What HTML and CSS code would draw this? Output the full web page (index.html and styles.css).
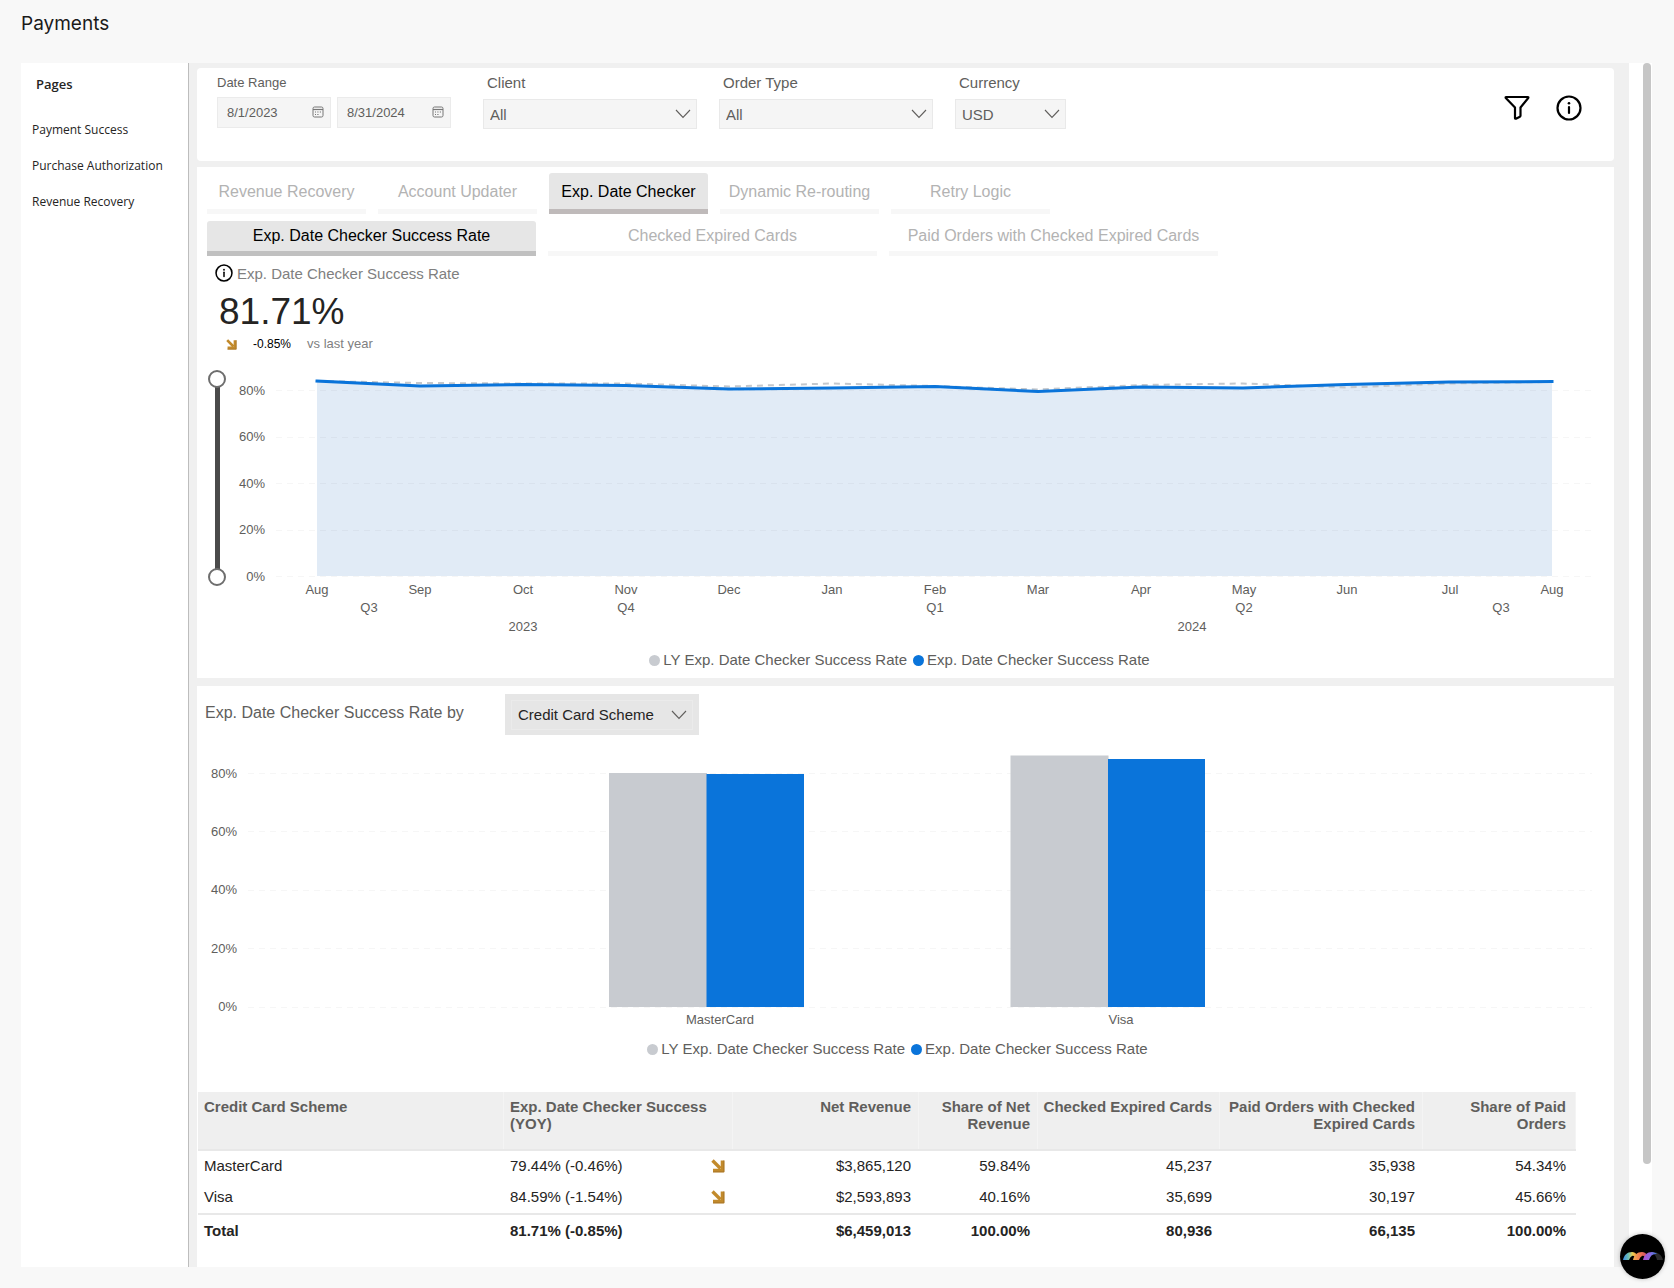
FILE: index.html
```html
<!DOCTYPE html>
<html lang="en">
<head>
<meta charset="utf-8">
<title>Payments</title>
<meta name="viewport" content="width=device-width, initial-scale=1">
<link rel="stylesheet" href="styles.css">
</head>
<body>
<svg class="defs" width="0" height="0" aria-hidden="true">
  <symbol id="chevron" viewBox="0 0 16 10"><path d="M1 1l7 7.500 7-7.500" fill="none" stroke="currentColor" stroke-width="1.100"/></symbol>
  <symbol id="calendar" viewBox="0 0 12 12"><rect x="1" y="1" width="10" height="10" rx="1.500" fill="none" stroke="currentColor"/><path d="M1 3.500h10" stroke="currentColor" stroke-width="1.200"/><path d="M5.300 6h1.200M7.800 6H9M3 6h1M3 8.500h1M5.300 8.500h1.200" stroke="currentColor" stroke-width="1.200"/></symbol>
  <symbol id="info" viewBox="0 0 26 26"><circle cx="13" cy="13" r="11.500" fill="none" stroke="currentColor" stroke-width="2.200"/><path d="M13 12v6" stroke="currentColor" stroke-width="2.200" stroke-linecap="round"/><circle cx="13" cy="8.300" r="1.300" fill="currentColor"/></symbol>
  <symbol id="down" viewBox="0 0 14 14"><path d="M1.500 1.500l8 8" stroke="#c28a2b" stroke-width="3.400"/><path d="M11.500 1.500v10H2" fill="none" stroke="#c28a2b" stroke-width="3.600"/><path d="M12.900 1.500V12.900H2" fill="none" stroke="#a8762a" stroke-width="1"/></symbol>
</svg>

<header class="page-header"><h1>Payments</h1></header>

<div class="report">
  <nav class="sidebar" aria-label="Pages">
    <h2>Pages</h2>
    <a href="#success">Payment Success</a>
    <a href="#authorization">Purchase Authorization</a>
    <a href="#recovery">Revenue Recovery</a>
  </nav>

  <main class="canvas">
    <section class="card filters">
      <div class="field dates">
        <label for="from">Date Range</label>
        <div class="date-row">
          <div class="date"><input id="from" type="text" value="8/1/2023"><svg class="cal"><use href="#calendar"/></svg></div>
          <div class="date"><input type="text" value="8/31/2024" aria-label="End date"><svg class="cal"><use href="#calendar"/></svg></div>
        </div>
      </div>
      <div class="field wide">
        <label for="client">Client</label>
        <div class="select"><select id="client"><option>All</option></select><svg class="chev"><use href="#chevron"/></svg></div>
      </div>
      <div class="field wide">
        <label for="order">Order Type</label>
        <div class="select"><select id="order"><option>All</option></select><svg class="chev"><use href="#chevron"/></svg></div>
      </div>
      <div class="field narrow">
        <label for="currency">Currency</label>
        <div class="select"><select id="currency"><option>USD</option></select><svg class="chev"><use href="#chevron"/></svg></div>
      </div>
      <div class="actions">
        <button class="icon-btn" type="button" aria-label="Filter"><svg width="26" height="26" viewBox="0 0 26 26"><path d="M2.200 2h21.600q.9 0 .4 1L16.500 12.500v8.300q0 .6-.6.900l-4 2q-.9.300-.9-.7V12.500L1.800 3q-.5-1 .4-1z" fill="none" stroke="#000" stroke-width="2.200" stroke-linejoin="round"/></svg></button>
        <button class="icon-btn" type="button" aria-label="Information"><svg width="26" height="26"><use href="#info"/></svg></button>
      </div>
    </section>

    <section class="card trend">
      <div class="tabs">
        <button type="button">Revenue Recovery</button>
        <button type="button">Account Updater</button>
        <button type="button" class="active">Exp. Date Checker</button>
        <button type="button">Dynamic Re-routing</button>
        <button type="button">Retry Logic</button>
      </div>
      <div class="tabs metrics">
        <button type="button" class="active">Exp. Date Checker Success Rate</button>
        <button type="button">Checked Expired Cards</button>
        <button type="button">Paid Orders with Checked Expired Cards</button>
      </div>
      <div class="kpi">
        <div class="kpi-title"><svg width="18" height="18"><use href="#info"/></svg>Exp. Date Checker Success Rate</div>
        <div class="kpi-value">81.71%</div>
        <div class="kpi-delta"><svg width="11" height="11"><use href="#down"/></svg><span class="delta">-0.85%</span><span>vs last year</span></div>
      </div>
      <div class="trend-chart">
        <div class="zoom-slider">
          <div class="track"></div>
          <input type="range" min="0" max="100" value="0" aria-label="Axis minimum">
          <input type="range" min="0" max="100" value="100" aria-label="Axis maximum">
        </div>
        <svg class="plot" viewBox="237 365 1377 275" role="img" aria-label="Success rate by month">
          <path class="fill" d="M317 381L420 386 523 384.500 626 385.500 729 389 832 388 935 386.500 1038 391.500 1141 387 1243 388 1346 384.500 1449 382 1552 381.500V576H317z"/>
          <g class="grid"><path d="M276 390.500H1592M276 437.500H1592M276 483.500H1592M276 530.500H1592M276 576.500H1592"/></g>
          <path class="last-year" d="M317 381L420 383 523 383.500 626 383.500 729 386.500 832 383.500 935 386 1038 389.500 1141 385 1243 383.500 1346 387.500 1449 383.500 1552 382"/>
          <path class="this-year" d="M317 381L420 386 523 384.500 626 385.500 729 389 832 388 935 386.500 1038 391.500 1141 387 1243 388 1346 384.500 1449 382 1552 381.500"/>
          <g class="ticks end"><text x="265" y="395">80%</text><text x="265" y="441">60%</text><text x="265" y="488">40%</text><text x="265" y="534">20%</text><text x="265" y="581">0%</text></g>
          <g class="ticks mid">
            <text x="317" y="594">Aug</text><text x="420" y="594">Sep</text><text x="523" y="594">Oct</text><text x="626" y="594">Nov</text><text x="729" y="594">Dec</text><text x="832" y="594">Jan</text><text x="935" y="594">Feb</text><text x="1038" y="594">Mar</text><text x="1141" y="594">Apr</text><text x="1244" y="594">May</text><text x="1347" y="594">Jun</text><text x="1450" y="594">Jul</text><text x="1552" y="594">Aug</text>
            <text x="369" y="612">Q3</text><text x="626" y="612">Q4</text><text x="935" y="612">Q1</text><text x="1244" y="612">Q2</text><text x="1501" y="612">Q3</text>
            <text x="523" y="631">2023</text><text x="1192" y="631">2024</text>
          </g>
        </svg>
      </div>
      <div class="legend"><span><i class="dot ly"></i>LY Exp. Date Checker Success Rate</span><span><i class="dot ty"></i>Exp. Date Checker Success Rate</span></div>
    </section>

    <section class="card breakdown">
      <div class="by-row">
        <label for="by">Exp. Date Checker Success Rate by</label>
        <div class="select scheme"><select id="by"><option>Credit Card Scheme</option></select><svg class="chev"><use href="#chevron"/></svg></div>
      </div>
      <svg class="bars" viewBox="197 745 1417 290" role="img" aria-label="Success rate by credit card scheme">
        <g class="grid"><path d="M248 773.500H1592M248 831.500H1592M248 890.500H1592M248 948.500H1592M248 1007.500H1592"/></g>
        <g class="bar-ly"><path d="M609 773h98v234h-98zM1010.500 755.500h98V1007h-98z"/></g>
        <g class="bar-ty"><path d="M706.500 774H804v233h-97.500zM1108 759H1205v248h-97z"/></g>
        <g class="ticks end"><text x="237" y="778">80%</text><text x="237" y="836">60%</text><text x="237" y="894">40%</text><text x="237" y="953">20%</text><text x="237" y="1011">0%</text></g>
        <g class="ticks mid"><text x="720" y="1024">MasterCard</text><text x="1121" y="1024">Visa</text></g>
      </svg>
      <div class="legend"><span><i class="dot ly"></i>LY Exp. Date Checker Success Rate</span><span><i class="dot ty"></i>Exp. Date Checker Success Rate</span></div>

      <div class="table-wrap">
      <table>
        <colgroup><col class="c1"><col class="c2"><col class="c3"><col class="c4"><col class="c5"><col class="c6"><col class="c7"></colgroup>
        <thead><tr><th>Credit Card Scheme</th><th>Exp. Date Checker Success (YOY)</th><th>Net Revenue</th><th>Share of Net Revenue</th><th>Checked Expired Cards</th><th>Paid Orders with Checked Expired Cards</th><th>Share of Paid Orders</th></tr></thead>
        <tbody>
          <tr><td>MasterCard</td><td><div class="yoy">79.44% (-0.46%)<svg width="14" height="14"><use href="#down"/></svg></div></td><td>$3,865,120</td><td>59.84%</td><td>45,237</td><td>35,938</td><td>54.34%</td></tr>
          <tr><td>Visa</td><td><div class="yoy">84.59% (-1.54%)<svg width="14" height="14"><use href="#down"/></svg></div></td><td>$2,593,893</td><td>40.16%</td><td>35,699</td><td>30,197</td><td>45.66%</td></tr>
        </tbody>
        <tfoot><tr><td>Total</td><td>81.71% (-0.85%)</td><td>$6,459,013</td><td>100.00%</td><td>80,936</td><td>66,135</td><td>100.00%</td></tr></tfoot>
      </table>
      </div>
    </section>
  </main>

  <div class="scroll"><div class="thumb"></div></div>
</div>

<button class="assistant" type="button" aria-label="Open assistant">
  <svg width="45" height="45" viewBox="0 0 45 45">
    <defs>
      <linearGradient id="g1"><stop offset="0" stop-color="#3b8ee8"/><stop offset=".4" stop-color="#6fc0b0"/><stop offset=".7" stop-color="#f0d050"/><stop offset="1" stop-color="#f08a3c"/></linearGradient>
      <linearGradient id="g2"><stop offset="0" stop-color="#f0b050"/><stop offset=".5" stop-color="#f07850"/><stop offset="1" stop-color="#c8486a"/></linearGradient>
      <linearGradient id="g3"><stop offset="0" stop-color="#b050d0"/><stop offset=".5" stop-color="#8a6ae0"/><stop offset="1" stop-color="#3a78d8"/></linearGradient>
    </defs>
    <path d="M32 18c6 0 10 3 11 8h-6q-1-5-5-8z" fill="#2c2c2c"/>
    <path d="M3 26c1-5 4-8 9-8 2 0 4 1 5 3l-2 2q-2-2-3-1-2 1-3 4z" fill="url(#g1)"/>
    <path d="M13 26c1-5 4-8 9-8 2 0 4 1 5 3l-2 2q-2-2-3-1-2 1-3 4z" fill="url(#g2)"/>
    <path d="M23 26c1-5 4-8 9-8 2 0 4 1 5 2q-6-1-8 6z" fill="url(#g3)"/>
  </svg>
</button>
</body>
</html>
```
FILE: styles.css
```css
* { box-sizing: border-box; }
body {
  margin: 0;
  background: #f8f8f8;
  color: #252423;
  font-family: "Liberation Sans", Arial, sans-serif;
  font-size: 15px;
}
svg { display: block; flex: none; }
.defs { position: absolute; }
button, select, input { font: inherit; color: inherit; margin: 0; }
button { border: 0; padding: 0; background: none; }

.page-header { height: 63px; padding: 12px 21px; }
.page-header h1 {
  margin: 0;
  font: 400 19px/24px Inter, sans-serif;
  color: #1a1a1a;
}

.report { display: flex; margin: 0 22px 21px 21px; }

.sidebar {
  flex: 0 0 168px;
  padding: 11px 11px;
  background: #fff;
  border-right: 1px solid #bdbdbd;
  font-family: "Open Sans", "Noto Sans", sans-serif;
}
.sidebar h2 { margin: 0 0 18px 4px; font-size: 13px; line-height: 20px; font-weight: 600; }
.sidebar a { display: block; font-size: 12px; line-height: 36px; color: #252423; text-decoration: none; white-space: nowrap; }

.canvas { flex: 1; min-width: 0; padding: 5px 15px 0 8px; background: #f0f0f0; }
.card { background: #fff; }

.filters {
  display: flex;
  align-items: flex-start;
  gap: 22px;
  padding: 6px 32px 32px 20px;
  margin-bottom: 6px;
  border-radius: 4px;
  color: #605e5c;
}
.field label { display: block; padding-left: 4px; margin-bottom: 7px; line-height: 18px; }
.dates { margin-right: 10px; }
.dates label { padding-left: 0; margin-bottom: 5px; font-size: 13px; }
.date-row { display: flex; gap: 6px; }
.date { display: flex; align-items: center; width: 114px; height: 31px; padding: 0 6px 1px 9px; background: #f5f5f5; border: 1px solid #ebebeb; font-size: 13px; }
.date input { flex: 1; min-width: 0; padding: 0; border: 0; background: none; }
.cal { width: 12px; height: 12px; color: #777; }
.wide { flex: 0 1 214px; }
.narrow { flex: 0 1 111px; }
.select { display: grid; align-items: center; }
.select > * { grid-area: 1 / 1; }
.select select {
  appearance: none;
  width: 100%;
  height: 30px;
  padding: 0 24px 0 6px;
  border: 1px solid #e9e9e9;
  border-radius: 0;
  background: #f5f5f5;
}
.chev { justify-self: end; width: 16px; height: 10px; margin-right: 6px; pointer-events: none; color: #605e5c; }
.actions { display: flex; gap: 26px; margin: 21px 0 0 auto; color: #000; }

.trend { padding: 6px 0 8px 10px; margin-bottom: 8px; }
.tabs { display: flex; gap: 12px; margin-bottom: 7px; }
.tabs button {
  flex: 0 1 159px;
  height: 41px;
  padding-top: 1px;
  border-bottom: 5px solid #f7f7f7;
  border-radius: 3px 3px 0 0;
  color: #b3b3b3;
  font-size: 16px;
  white-space: nowrap;
}
.tabs .active { background: #e6e6e6; border-bottom-color: #bfbaba; color: #000; }
.metrics { margin-bottom: 8px; }
.metrics button { flex-basis: 329px; height: 35px; padding-top: 0; }
.metrics .active { border-bottom-color: #c0c0c0; }

.kpi { padding-left: 8px; color: #808080; }
.kpi-title { display: flex; gap: 4px; line-height: 20px; }
.kpi-title svg { color: #000; }
.kpi-value { margin: 8px 0 4px 4px; font-size: 37px; line-height: 40px; color: #252423; }
.kpi-delta { display: flex; align-items: center; gap: 16px; padding-left: 11px; font-size: 13px; line-height: 16px; }
.delta { font-size: 12px; color: #000; }

.trend-chart { display: flex; margin-top: 13px; }
.zoom-slider { position: relative; flex: 0 0 30px; }
.track { position: absolute; left: 8px; top: 14px; width: 5px; height: 198px; background: #4a4a4a; }
.zoom-slider input {
  position: absolute;
  left: 1px;
  top: 5px;
  width: 18px;
  height: 216px;
  margin: 0;
  appearance: none;
  background: none;
  writing-mode: vertical-lr;
  direction: rtl;
  pointer-events: none;
}
.zoom-slider input::-webkit-slider-thumb {
  appearance: none;
  width: 18px;
  height: 18px;
  border: 2px solid #6e6e6e;
  border-radius: 50%;
  background: #fff;
  pointer-events: auto;
}
.plot { flex: 1; min-width: 0; height: auto; }
.fill { fill: #e1ebf6; }
.grid path { fill: none; stroke: #000; stroke-opacity: .035; stroke-dasharray: 6 5; }
.last-year { fill: none; stroke: #c5c8cc; stroke-width: 2; stroke-dasharray: 6 5; }
.this-year { fill: none; stroke: #0a74da; stroke-width: 3; stroke-linejoin: round; stroke-linecap: square; }
.ticks { font-size: 13px; fill: #605e5c; }
.end { text-anchor: end; }
.mid { text-anchor: middle; }

.legend { display: flex; justify-content: center; gap: 6px; margin-top: 10px; padding-right: 22px; line-height: 20px; color: #605e5c; white-space: nowrap; }
.breakdown .legend { margin-top: 4px; padding-right: 16px; }
.legend span { display: flex; align-items: center; gap: 3px; }
.dot { width: 11px; height: 11px; border-radius: 50%; }
.ly { background: #c8cbd0; }
.ty { background: #0a74da; }

.breakdown { padding: 8px 0 20px; }
.by-row { display: flex; align-items: center; padding-left: 8px; margin-bottom: 10px; color: #605e5c; }
.by-row label { flex: 0 0 300px; padding-bottom: 4px; font-size: 16px; line-height: 20px; }
.scheme { width: 194px; height: 41px; padding: 0 6px; background: #e6e6e6; color: #252423; }
.scheme select { border-color: #ebebeb; background: #e6e6e6; }
.bars { width: 100%; height: auto; }
.bar-ly { fill: #c8cbd0; }
.bar-ty { fill: #0a74da; }

.table-wrap { margin: 33px 38px 0 1px; }
table { width: 100%; table-layout: fixed; border-collapse: separate; border-spacing: 0; line-height: 17px; }
.c1 { width: 306px; }
.c2 { width: 229px; }
.c3 { width: 186px; }
.c4 { width: 119px; }
.c5 { width: 182px; }
.c6 { width: 203px; }
.c7 { width: 153px; }
th, td { padding: 0 8px 2px 6px; text-align: right; }
th { height: 59px; padding-top: 6px; padding-left: 0; vertical-align: top; background: #efefef; border-bottom: 2px solid #e8e8e8; color: #605e5c; box-shadow: inset -1px 0 #f4f4f4; }
th:first-child, th:nth-child(2) { padding-left: 6px; }
th:last-child, td:last-child { padding-right: 10px; }
th:first-child, td:first-child, th:nth-child(2), td:nth-child(2) { text-align: left; }
td { height: 31px; }
tfoot td { height: 34px; border-top: 2px solid #e8e8e8; font-weight: 700; }
.yoy { display: flex; align-items: center; justify-content: space-between; }

.scroll { display: flex; flex: 0 0 23px; justify-content: flex-end; padding: 0 1px 103px 0; background: #fff; }
.thumb { width: 8px; border-radius: 4px; background: #c6c6c6; }

.assistant { position: fixed; right: 9px; bottom: 9px; width: 45px; height: 45px; border-radius: 50%; background: #000; box-shadow: 0 0 4px rgba(0, 0, 0, .25); }
```
